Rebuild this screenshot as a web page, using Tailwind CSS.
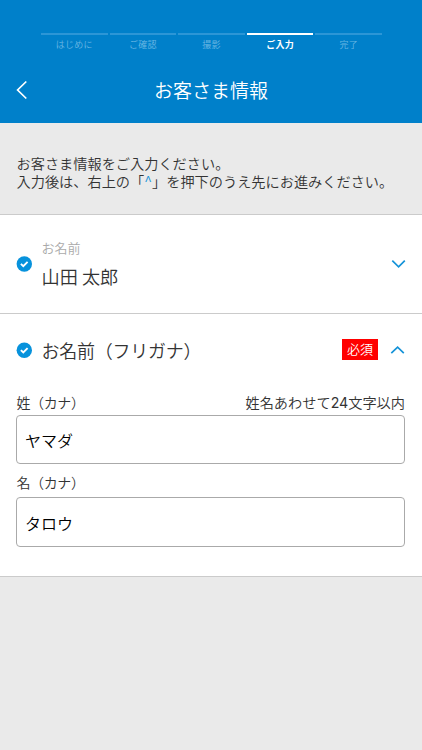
<!DOCTYPE html>
<html lang="ja">
<head>
<meta charset="utf-8">
<title>お客さま情報</title>
<script src="https://cdn.jsdelivr.net/npm/@tailwindcss/browser@4"></script>
</head>
<body class="flex h-[750px] w-[422px] flex-col overflow-hidden bg-[#eaeaea] font-['Noto_Sans_CJK_JP',sans-serif] font-[350] text-[#333]">
<header class="h-[123px] shrink-0 bg-[#0080ca] pt-[33px] text-white">
  <ol class="ml-[41px] grid w-[341px] grid-cols-5 gap-x-[2px] text-center text-[9px] leading-[16px] tracking-[0.3px] text-[#6bb7e3]">
    <li class="border-t-2 border-[#2c96d6] pt-[2px]">はじめに</li>
    <li class="border-t-2 border-[#2c96d6] pt-[2px]">ご確認</li>
    <li class="border-t-2 border-[#2c96d6] pt-[2px]">撮影</li>
    <li class="border-t-2 border-white pt-[2px] font-bold text-white">ご入力</li>
    <li class="border-t-2 border-[#2c96d6] pt-[2px]">完了</li>
  </ol>
  <div class="mt-[23px] grid h-[28px] grid-cols-[40px_1fr_40px] items-center">
    <svg class="ml-[16px] h-[20px] w-[12px]" viewBox="0 0 12 20" fill="none" stroke="currentColor" stroke-width="1.7"><path d="M10.3 1.5 1.6 10l8.7 8.5"/></svg>
    <h1 class="text-center text-[19px] font-[350] leading-[28px]">お客さま情報</h1>
  </div>
</header>
<div class="flex h-[91px] shrink-0 flex-col pt-[31px] pl-[16.5px] text-[14.2px] leading-[18px] whitespace-nowrap">
  <p>お客さま情報をご入力ください。</p>
  <p>入力後は、右上の「<span class="text-[#1593d8]">^</span>」を押下のうえ先にお進みください。</p>
</div>
<main class="h-[363px] shrink-0 border-y border-[#cbcbcb] bg-white">
  <section class="flex h-[99px] items-center border-b border-[#cbcbcb] pr-[16px] pl-[16px]">
    <svg class="size-[16px]" viewBox="0 0 16 16"><circle cx="8.3" cy="8" r="7.7" fill="#0792dc"/><path d="m4.9 7.8 2.4 2.4L11.6 5.9" fill="none" stroke="#fff" stroke-width="1.9"/></svg>
    <div class="ml-[9.5px] flex-1">
      <div class="text-[13px] leading-[20px] text-[#aaa]">お名前</div>
      <div class="mt-[4px] text-[18.2px] leading-[28px]">山田 太郎</div>
    </div>
    <svg class="h-[10px] w-[15px]" viewBox="0 0 15 10" fill="none" stroke="#1593d8" stroke-width="1.7"><path d="m1.3 1.7 6.3 6.1 6.2-6.1"/></svg>
  </section>
  <section class="pr-[17px] pl-[16px]">
    <div class="flex h-[71px] items-center">
      <svg class="size-[16px]" viewBox="0 0 16 16"><circle cx="8.3" cy="8.3" r="7.7" fill="#0792dc"/><path d="m4.9 8.1 2.4 2.4L11.6 6.2" fill="none" stroke="#fff" stroke-width="1.9"/></svg>
      <h2 class="ml-[9.5px] flex-1 text-[18px] leading-[28px] tracking-[-0.25px]">お名前（フリガナ）</h2>
      <span class="mr-[12px] flex h-[21px] w-[36px] items-center justify-center bg-[#f00] pb-px text-[13px] text-white">必須</span>
      <svg class="h-[10px] w-[15px]" viewBox="0 0 15 10" fill="none" stroke="#1593d8" stroke-width="1.7"><path d="m1.3 8.2 6.3-6.1 6.2 6.1"/></svg>
    </div>
    <div class="mt-[6px] flex h-[22px] justify-between pl-[0.5px] text-[14.2px] leading-[22px]">
      <label for="sei" class="text-[14px] tracking-[-0.4px]">姓（カナ）</label><span>姓名あわせて<span class="font-['Inter'] font-normal">24</span>文字以内</span>
    </div>
    <input id="sei" value="ヤマダ" class="mt-[2px] block h-[49px] w-[389px] rounded-[4px] border border-[#aaa] bg-white px-[8px] pt-px text-[16px] text-black">
    <label for="mei" class="mt-[7px] block h-[22px] pl-[0.5px] text-[14px] leading-[22px] tracking-[-0.4px]">名（カナ）</label>
    <input id="mei" value="タロウ" class="mt-[4px] block h-[50px] w-[389px] rounded-[4px] border border-[#aaa] bg-white px-[8px] pt-px text-[16px] text-black">
  </section>
</main>
</body>
</html>
